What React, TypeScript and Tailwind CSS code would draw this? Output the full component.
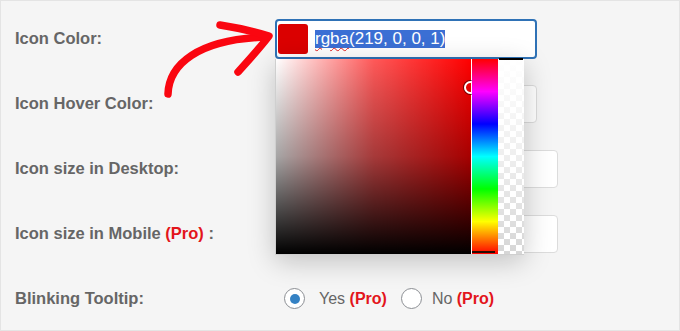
import React from "react";

const labelCls = "w-[274px] shrink-0 pl-[14px] text-[16.5px] font-bold text-[#666]";

function Pro() {
  return <span className="font-bold text-[#e3151b]">(Pro)</span>;
}

function Radio({ checked }: { checked?: boolean }) {
  return (
    <span className="flex h-[21px] w-[21px] shrink-0 items-center justify-center rounded-full border border-[#8c8f94] bg-white">
      {checked && <span className="h-[10px] w-[10px] rounded-full bg-[#3582c4]" />}
    </span>
  );
}

function ColorPicker() {
  return (
    <div className="absolute left-0 top-full z-10 flex h-[196px] w-[249px] border-b border-l border-[#cfcfcf] bg-white shadow-[0_6px_26px_rgba(0,0,0,0.22)]">
      {/* saturation / value */}
      <div className="relative h-full w-[195px] bg-[#ff0000]">
        <div className="absolute inset-0 bg-linear-to-r from-white via-white/35 via-50% to-transparent" />
        <div className="absolute inset-0 bg-linear-to-b from-transparent via-black/35 via-50% to-black" />
        <span className="absolute left-[188px] top-[22px] h-[13px] w-[13px] rounded-full border-2 border-white shadow-[0_0_0_1px_rgba(0,0,0,0.55)]" />
      </div>
      {/* hue */}
      <div className="relative ml-px h-full w-[26px] bg-[linear-gradient(to_bottom,#f00,#f0f,#00f,#0ff,#0f0,#ff0,#f00)]">
        <span className="absolute bottom-[1px] left-0 right-[3px] h-[2px] bg-[#2a0a00]" />
      </div>
      {/* alpha */}
      <div className="relative h-full w-[26px] bg-white bg-[repeating-conic-gradient(#d6d6d6_0_25%,#ffffff_0_50%)] bg-[length:12px_12px]">
        <div className="absolute inset-0 bg-linear-to-b from-white via-white/60 to-transparent" />
        <span className="absolute left-px right-px top-[-1px] h-[2px] bg-black" />
      </div>
    </div>
  );
}

function Arrow() {
  return (
    <svg
      className="pointer-events-none absolute left-[150px] top-[10px] h-[95px] w-[130px]"
      viewBox="150 10 130 95"
      fill="none"
      stroke="#fa0610"
      strokeWidth={7.5}
      strokeLinecap="round"
      strokeLinejoin="round"
    >
      <path d="M167 93 C168 64 196 38 266 36" />
      <path d="M219 24 C238 27 252 30 268 35 C258 48 247 60 237 71" />
    </svg>
  );
}

export default function App() {
  return (
    <div
      className="relative h-[331px] w-full overflow-hidden border border-[#e4e4e4] bg-[#f5f5f5] pt-[5px]"
      style={{ fontFamily: '"Liberation Sans", Arial, sans-serif' }}
    >
      <Arrow />

      <div className="flex h-[65px] items-center">
        <div className={labelCls}>Icon Color:</div>
        <div className="relative">
          <div className="flex h-[40px] w-[262px] items-center rounded-[4px] border-2 border-[#2f72b6] bg-white pl-px">
            <span className="h-[30px] w-[30px] rounded-[3px] bg-[#db0000]" />
            <span className="ml-[7px] bg-[#3b6fd4] text-[17px] leading-[18px] text-white">
              <span className="underline decoration-[#e02020] decoration-wavy decoration-1 underline-offset-[3px]">rgba</span>
              (219, 0, 0, 1)
            </span>
          </div>
          <ColorPicker />
        </div>
      </div>

      <div className="flex h-[65px] items-center">
        <div className={labelCls}>Icon Hover Color:</div>
        <div className="h-[38px] w-[262px] rounded-[4px] border border-[#dcdcdc] bg-white" />
      </div>

      <div className="flex h-[65px] items-center">
        <div className={labelCls}>Icon size in Desktop:</div>
        <div className="h-[38px] w-[283px] rounded-[4px] border border-[#dcdcdc] bg-white" />
      </div>

      <div className="flex h-[65px] items-center">
        <div className={labelCls}>
          Icon size in Mobile <Pro /> :
        </div>
        <div className="h-[38px] w-[283px] rounded-[4px] border border-[#dcdcdc] bg-white" />
      </div>

      <div className="flex h-[65px] items-center">
        <div className={labelCls}>Blinking Tooltip:</div>
        <div className="flex items-center text-[16px] text-[#666]">
          <span className="ml-[9px]">
            <Radio checked />
          </span>
          <span className="ml-[14px]">
            Yes <Pro />
          </span>
          <span className="ml-[14px]">
            <Radio />
          </span>
          <span className="ml-[10px]">
            No <Pro />
          </span>
        </div>
      </div>
    </div>
  );
}
